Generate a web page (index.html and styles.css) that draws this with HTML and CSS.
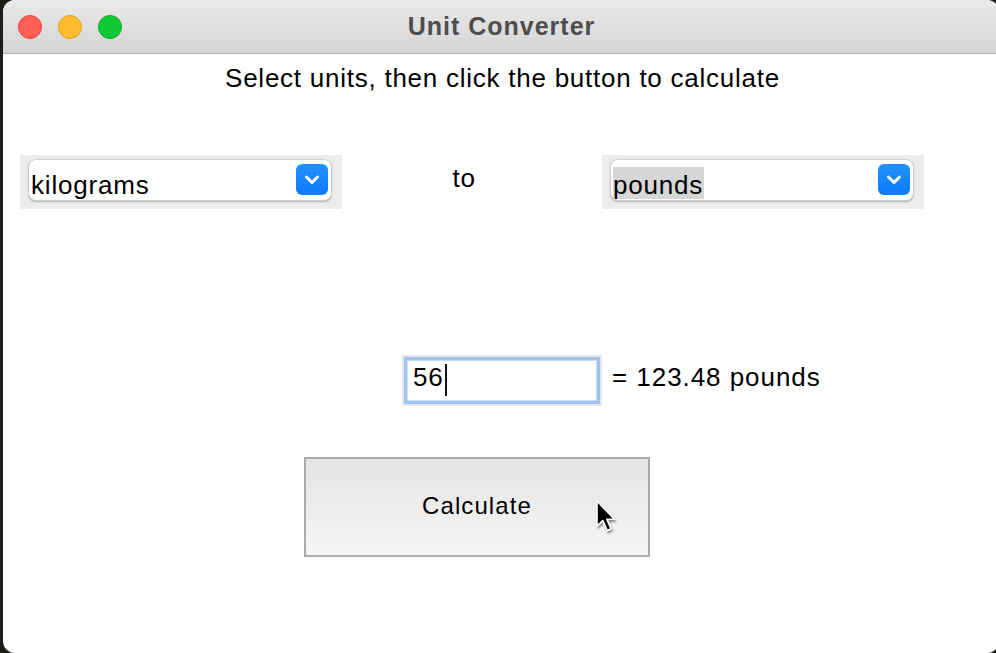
FILE: index.html
```html
<!DOCTYPE html>
<html>
<head>
<meta charset="utf-8">
<title>Unit Converter</title>
<link rel="stylesheet" href="styles.css">
</head>
<body>
<div class="window">
  <div class="titlebar">
    <div class="lights">
      <span class="light red"></span>
      <span class="light yellow"></span>
      <span class="light green"></span>
    </div>
    <div class="title">Unit Converter</div>
  </div>
  <div class="content">
    <div class="subtitle">Select units, then click the button to calculate</div>
    <div class="units-row">
      <div class="combo-wrap">
        <div class="combo">
          <span class="combo-text">kilograms</span>
          <span class="combo-btn"><svg width="32" height="31" viewBox="0 0 32 31"><path d="M10.5 13 L16 18.5 L21.5 13" fill="none" stroke="#fff" stroke-width="3" stroke-linecap="round" stroke-linejoin="round"/></svg></span>
        </div>
      </div>
      <div class="to">to</div>
      <div class="combo-wrap">
        <div class="combo">
          <span class="combo-text selected">pounds</span>
          <span class="combo-btn"><svg width="32" height="31" viewBox="0 0 32 31"><path d="M10.5 13 L16 18.5 L21.5 13" fill="none" stroke="#fff" stroke-width="3" stroke-linecap="round" stroke-linejoin="round"/></svg></span>
        </div>
      </div>
    </div>
    <div class="entry-row">
      <div class="entry-wrap">
        <div class="entry"><span class="entry-text">56</span><span class="caret"></span></div>
      </div>
      <div class="result">= 123.48 pounds</div>
    </div>
    <div class="button-row">
      <div class="calc-btn">Calculate</div>
    </div>
  </div>
  <svg class="pointer" width="24" height="38" viewBox="0 0 24 38">
    <defs>
      <filter id="sh" x="-30%" y="-30%" width="160%" height="160%">
        <feGaussianBlur in="SourceAlpha" stdDeviation="1"/>
        <feOffset dx="0.5" dy="1.5" result="b"/>
        <feComponentTransfer><feFuncA type="linear" slope="0.45"/></feComponentTransfer>
        <feMerge><feMergeNode/><feMergeNode in="SourceGraphic"/></feMerge>
      </filter>
    </defs>
    <path filter="url(#sh)" d="M2 2 L2 27 L7.8 21.5 L12.2 31.5 L16 29.8 L11.8 20.2 L19.5 20.2 Z" fill="#000" stroke="#fff" stroke-width="1.6" stroke-linejoin="round"/>
  </svg>
</div>
</body>
</html>
```

FILE: styles.css
```css
html, body {
  margin: 0;
  padding: 0;
  overflow: hidden;
}
body {
  width: 996px;
  height: 653px;
  background: #1d1c19;
  font-family: "Liberation Sans", Arial, sans-serif;
  color: #000;
}
.window {
  position: relative;
  margin-left: 3px;
  width: 996px;
  height: 653px;
  background: #fff;
  border-radius: 12px;
  overflow: hidden;
}
.titlebar {
  position: relative;
  height: 53px;
  border-bottom: 1px solid #b3b3b3;
  background: linear-gradient(#e9e9e9, #d5d5d5);
}
.lights {
  position: absolute;
  left: 15px;
  top: 15px;
  display: flex;
  gap: 16px;
}
.light {
  width: 22px;
  height: 22px;
  border-radius: 50%;
  border: 1px solid;
}
.red { background: #ff5f57; border-color: #e2463f; }
.yellow { background: #febc2e; border-color: #e1a116; }
.green { background: #13c837; border-color: #0ea62a; }
.title {
  text-align: center;
  line-height: 53px;
  font-size: 25px;
  font-weight: bold;
  letter-spacing: 1px;
  color: #4d4d4d;
  padding-left: 1px;
}
.content {
  display: flex;
  flex-direction: column;
}
.subtitle {
  margin-top: 9px;
  line-height: 30px;
  font-size: 26px;
  letter-spacing: 0.75px;
  text-align: center;
  padding-left: 3px;
}
.units-row {
  display: flex;
  margin-top: 62px;
  margin-left: 17px;
}
.combo-wrap {
  width: 322px;
  height: 54px;
  background: #ececec;
  box-sizing: border-box;
  padding: 4px 10px 0 8px;
}
.combo {
  display: flex;
  align-items: flex-start;
  height: 42px;
  box-sizing: border-box;
  background: #fff;
  border: 1px solid #cfcfcf;
  border-radius: 8px;
  box-shadow: 0 1px 1.5px rgba(0, 0, 0, 0.25);
  padding-left: 2px;
}
.combo-text {
  margin-top: 7px;
  height: 32px;
  line-height: 32px;
  font-size: 26px;
  letter-spacing: 0.8px;
  padding-top: 2px;
  box-sizing: border-box;
}
.combo-text.selected {
  background: #d6d6d6;
  padding-right: 1px;
}
.combo-btn {
  display: block;
  margin-left: auto;
  margin-top: 4px;
  margin-right: 3px;
  width: 32px;
  height: 31px;
  border-radius: 6px;
  background: linear-gradient(#2592ff, #0a7bff);
}
.combo-btn svg {
  display: block;
}
.to {
  width: 260px;
  box-sizing: border-box;
  padding-right: 16px;
  text-align: center;
  line-height: 47px;
  font-size: 26px;
  letter-spacing: 0.7px;
}
.entry-row {
  display: flex;
  align-items: flex-start;
  margin-top: 146px;
  margin-left: 399px;
}
.entry-wrap {
  width: 200px;
  height: 51px;
  box-sizing: border-box;
  padding: 2px;
  background: #e6e6e6;
}
.entry {
  display: flex;
  align-items: flex-start;
  height: 47px;
  box-sizing: border-box;
  background: #fff;
  border: 3px solid #9fc4f2;
  box-shadow: inset 0 0 0 1px #c8dcf6;
  padding: 2px 0 0 6px;
}
.entry-text {
  line-height: 30px;
  font-size: 26px;
  letter-spacing: 0.7px;
}
.caret {
  display: block;
  width: 2px;
  height: 32px;
  margin-left: 2px;
  margin-top: 2px;
  background: #111;
}
.result {
  margin-left: 10px;
  padding-top: 7px;
  line-height: 30px;
  font-size: 26px;
  letter-spacing: 0.95px;
}
.button-row {
  display: flex;
  margin-top: 51px;
  margin-left: 301px;
}
.calc-btn {
  width: 346px;
  height: 100px;
  box-sizing: border-box;
  border: 2px solid #aaaaaa;
  background: linear-gradient(#e4e4e4, #f5f5f5);
  display: flex;
  align-items: center;
  justify-content: center;
  font-size: 24px;
  letter-spacing: 1.1px;
  padding-bottom: 2px;
}
.pointer {
  position: absolute;
  left: 592px;
  top: 499px;
}
```
